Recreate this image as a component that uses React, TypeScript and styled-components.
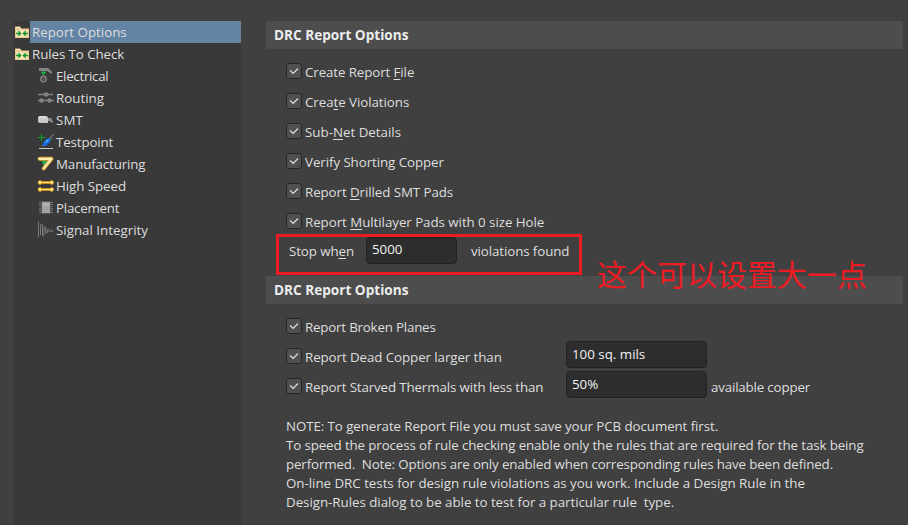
import React from "react";
import styled, { createGlobalStyle } from "styled-components";

const GlobalStyle = createGlobalStyle`
  * { box-sizing: border-box; }
  body {
    margin: 0;
    background: #404040;
    color: #dedede;
    font-family: "Open Sans", "Noto Sans", sans-serif;
    font-size: 13.33px;
    overflow: hidden;
  }
`;

const Window = styled.div`
  display: flex;
  width: 908px;
  height: 525px;
  padding: 21px 5px 0 14px;
  background: #404040;
`;

const Tree = styled.nav`
  flex: none;
  width: 227px;
  background: #393939;
`;

const TreeRow = styled.div<{ $depth: number }>`
  display: flex;
  height: 22px;
  padding-left: ${(p) => (p.$depth ? 23 : 0)}px;
`;

const TreeLabel = styled.span<{ $selected?: boolean; $inset: number }>`
  flex: 1;
  line-height: 22px;
  padding-left: ${(p) => p.$inset}px;
  white-space: nowrap;
  background: ${(p) => (p.$selected ? "#6384a5" : "transparent")};
  outline: ${(p) => (p.$selected ? "1px dotted #7d7f85" : "none")};
  outline-offset: -1px;
`;

const Icon = styled.svg`
  flex: none;
  display: block;
`;

const Label = styled.span<{ $ls?: number }>`
  white-space: pre;
  letter-spacing: ${(p) => p.$ls ?? 0}px;
`;

const Key = styled.span`
  text-decoration: underline;
  text-decoration-thickness: 1px;
  text-underline-offset: 2px;
  text-decoration-skip-ink: none;
`;

const Content = styled.main`
  flex: 1;
  margin-left: 25px;
`;

const Header = styled.h2`
  height: 28px;
  margin: 0;
  padding-left: 8px;
  background: #4d4d4d;
  color: #ececec;
  font-size: 13.6px;
  font-weight: 700;
  line-height: 28px;
`;

const Options = styled.div<{ $height: number }>`
  position: relative;
  height: ${(p) => p.$height}px;
  padding: 7px 0 0 20px;
`;

const Row = styled.div`
  display: flex;
  height: 30px;
  line-height: 30px;
`;

const Box = styled.span`
  flex: none;
  display: grid;
  place-items: center;
  width: 16px;
  height: 16px;
  margin: 7px 3px 0 0;
  border: 1px solid #262626;
  border-radius: 3px;
  background: #505050;
`;

const OptionText = styled.div<{ $width?: number }>`
  width: ${(p) => (p.$width ? p.$width + "px" : "auto")};
  padding-top: 1px;
`;

const Suffix = styled(OptionText)`
  padding-left: 4px;
`;

const Field = styled.input<{ $width: number }>`
  width: ${(p) => p.$width}px;
  height: 27px;
  padding: 0 0 2px 5px;
  border: 1px solid #222;
  border-radius: 4px;
  background: #2d2d2d;
  color: #f2f2f2;
  font: inherit;
  outline: none;
`;

const StopRow = styled.div`
  display: flex;
  height: 28px;
  padding: 1px 0 0 3px;
  line-height: 29px;
`;

const StopText = styled.div<{ $width: number; $inset?: number }>`
  width: ${(p) => p.$width}px;
  padding-left: ${(p) => p.$inset ?? 0}px;
`;

const Highlight = styled.div`
  position: absolute;
  left: 10px;
  top: 185px;
  width: 306px;
  height: 41px;
  border: 3px solid #ed1c24;
`;

const Annotation = styled.div`
  position: absolute;
  z-index: 1;
  left: 331px;
  top: 204px;
  color: #ed1c24;
  font: 400 30px/40px "Noto Sans CJK SC", sans-serif;
  white-space: nowrap;
`;

const Note = styled.div`
  padding: 1px 0 0 20px;
  line-height: 19.1px;
`;

const NoteLine = styled.div`
  height: 19.1px;
`;

const FolderIcon = () => (
  <Icon width="16" height="22" viewBox="0 0 16 22">
    <path d="M1 5.5h5l1.5 2H15V17H1z" fill="#e8c98e" />
    <path d="M2 6.5h3.500l1.500 2" fill="none" stroke="#fff0cd" />
    <path d="M2 9h12v7H2z" fill="#f5e3b8" />
    <path d="M2 12.500h4.500M4.300 10.200l2.400 2.300-2.400 2.300M14 12.500H9.500M11.700 10.200l-2.400 2.300 2.400 2.300" fill="none" stroke="#12952b" strokeWidth="1.3" />
  </Icon>
);

const drawings: Record<string, React.ReactNode> = {
  electrical: (
    <>
      <path d="M2 3h9l4 4v2l-5-3H2z" fill="#858585" />
      <path d="M6.5 5.5l2.5 2-2.5 3-2.5-3z" fill="#0d9638" />
      <path d="M5 7.5h1M7 7.5h1M6 9h1" stroke="#31c957" />
      <circle cx="6.5" cy="14" r="2.7" fill="none" stroke="#858585" strokeWidth="1.4" />
      <circle cx="6.5" cy="14" r=".8" fill="#858585" />
    </>
  ),
  routing: (
    <g fill="none" stroke="#858585" strokeWidth="1.3">
      <path d="M1 7.5h6M11 7.5h5M1 13.5h2M6 13.5h5M14 13.5h3" />
      <circle cx="9" cy="7.5" r="1.6" fill="#858585" />
      <circle cx="4.5" cy="13.5" r="1.6" fill="#858585" />
      <circle cx="12.5" cy="13.5" r="1.6" fill="#858585" />
    </g>
  ),
  smt: (
    <>
      <path d="M1 8.5Q1 7 3 7h6q2 0 2 2v5H4q-3 0-3-2z" fill="#c9c9c9" />
      <path d="M2 8h7" stroke="#ededed" />
      <path d="M11 9h3l2.3 4.5h-2L12.8 12H11z" fill="#939393" />
    </>
  ),
  testpoint: (
    <>
      <path d="M12 8l3.3-3.5M15 4h2M14 6v2.5" stroke="#666" strokeWidth="1.4" />
      <path d="M5 15l2-2" stroke="#aaa" />
      <ellipse cx="9.7" cy="11.2" rx="4.8" ry="2.4" transform="rotate(-46 9.7 11.2)" fill="#1268dc" />
      <path d="M8.500 11.500l3-3" stroke="#58b4ff" strokeWidth="1.3" />
      <path d="M4.500 3v7M1 6.500h7" stroke="#05a52c" />
      <path d="M2 17.500h14" stroke="#c4c4c4" />
    </>
  ),
  manufacturing: (
    <>
      <path d="M4 7l8 1-5 5z" fill="#21ad58" />
      <path d="M2.500 5.800h12L6.800 15.400" fill="none" stroke="#dca331" strokeWidth="3.9" strokeLinecap="round" strokeLinejoin="round" />
      <path d="M2.500 5.800h12L6.800 15.400" fill="none" stroke="#ffeab0" strokeWidth="2.2" strokeLinecap="round" strokeLinejoin="round" />
    </>
  ),
  highspeed: (
    <>
      {[7.5, 14.5].map((y) => (
        <g key={y}>
          <path d={`M3 ${y}h12`} stroke="#eda319" strokeWidth="2.6" />
          <path d={`M3 ${y}h12`} stroke="#ffdf78" />
          <circle cx="3" cy={y} r="1.8" fill="#fff1a5" stroke="#eda319" />
          <circle cx="14.7" cy={y} r="1.8" fill="#fff1a5" stroke="#eda319" />
        </g>
      ))}
    </>
  ),
  placement: (
    <>
      <path d="M2 5.5h14M2 7.5h14M2 9.5h14M2 11.5h14M2 13.5h14M2 15.5h14" stroke="#717171" />
      <rect x="4.5" y="4.5" width="9" height="12" fill="#a2a2a2" stroke="#585858" />
      <path d="M6 6h6v3H6z" fill="#b2b2b2" />
    </>
  ),
  signal: (
    <path
      d="M1.5 3v15M3.5 16V7q0-2 1-2t1 2v8q0 2 .8 2t.8-2V9q0-1.5.8-1.5T8.7 9v4q0 1.5.8 1.5t.8-1.5v-2q0-1 .8-1t.8 1v1q0 1 .9 1t.9-1 .9-1 .7 1 1 .5"
      fill="none"
      stroke="#828282"
      strokeWidth=".9"
    />
  ),
};

const categories: { icon: string; text: string; ls: number }[] = [
  { icon: "electrical", text: "Electrical", ls: -0.3 },
  { icon: "routing", text: "Routing", ls: 0 },
  { icon: "smt", text: "SMT", ls: 0.1 },
  { icon: "testpoint", text: "Testpoint", ls: -0.13 },
  { icon: "manufacturing", text: "Manufacturing", ls: -0.13 },
  { icon: "highspeed", text: "High Speed", ls: -0.06 },
  { icon: "placement", text: "Placement", ls: -0.25 },
  { icon: "signal", text: "Signal Integrity", ls: 0 },
];

const reportOptions: { parts: [string, string, string]; ls: number }[] = [
  { parts: ["Create Report ", "F", "ile"], ls: -0.1 },
  { parts: ["Crea", "t", "e Violations"], ls: -0.06 },
  { parts: ["Sub-", "N", "et Details"], ls: 0 },
  { parts: ["Verify Shorting Copper", "", ""], ls: -0.07 },
  { parts: ["Report ", "D", "rilled SMT Pads"], ls: -0.08 },
  { parts: ["Report ", "M", "ultilayer Pads with 0 size Hole"], ls: -0.05 },
];

const notes: { text: string; ls: number }[] = [
  { text: "NOTE: To generate Report File you must save your PCB document first.", ls: -0.085 },
  { text: "To speed the process of rule checking enable only the rules that are required for the task being", ls: -0.115 },
  { text: "performed.  Note: Options are only enabled when corresponding rules have been defined.", ls: -0.14 },
  { text: "On-line DRC tests for design rule violations as you work. Include a Design Rule in the", ls: -0.025 },
  { text: "Design-Rules dialog to be able to test for a particular rule  type.", ls: -0.035 },
];

const Check = () => (
  <Box>
    <svg width="14" height="14" viewBox="0 0 14 14">
      <path d="M3.2 6.5l3 3 4.8-5" fill="none" stroke="#e0e0e0" strokeWidth="1.2" />
    </svg>
  </Box>
);

export default function App() {
  return (
    <>
      <GlobalStyle />
      <Window>
        <Tree>
          <TreeRow $depth={0}>
            <FolderIcon />
            <TreeLabel $selected $inset={2}><Label>Report Options</Label></TreeLabel>
          </TreeRow>
          <TreeRow $depth={0}>
            <FolderIcon />
            <TreeLabel $inset={2}><Label $ls={-0.08}>Rules To Check</Label></TreeLabel>
          </TreeRow>
          {categories.map((c) => (
            <TreeRow key={c.text} $depth={1}>
              <Icon width="18" height="22" viewBox="0 0 18 22">{drawings[c.icon]}</Icon>
              <TreeLabel $inset={1}><Label $ls={c.ls}>{c.text}</Label></TreeLabel>
            </TreeRow>
          ))}
        </Tree>
        <Content>
          <Header>DRC Report Options</Header>
          <Options $height={227}>
            {reportOptions.map((o) => (
              <Row key={o.parts.join("")}>
                <Check />
                <OptionText>
                  <Label $ls={o.ls}>{o.parts[0]}<Key>{o.parts[1]}</Key>{o.parts[2]}</Label>
                </OptionText>
              </Row>
            ))}
            <StopRow>
              <StopText $width={77}><Label $ls={-0.1}>Stop wh<Key>e</Key>n</Label></StopText>
              <Field $width={91} defaultValue="5000" />
              <StopText $width={124} $inset={14}><Label $ls={-0.1}>violations found</Label></StopText>
            </StopRow>
            <Highlight />
            <Annotation>这个可以设置大一点</Annotation>
          </Options>
          <Header>DRC Report Options</Header>
          <Options $height={112}>
            <Row><Check /><OptionText><Label $ls={-0.2}>Report Broken Planes</Label></OptionText></Row>
            <Row>
              <Check />
              <OptionText $width={261}><Label $ls={-0.08}>Report Dead Copper larger than</Label></OptionText>
              <Field $width={141} defaultValue="100 sq. mils" />
            </Row>
            <Row>
              <Check />
              <OptionText $width={261}><Label $ls={-0.13}>Report Starved Thermals with less than</Label></OptionText>
              <Field $width={141} defaultValue="50%" />
              <Suffix><Label $ls={-0.17}>available copper</Label></Suffix>
            </Row>
          </Options>
          <Note>
            {notes.map((n) => (
              <NoteLine key={n.text}><Label $ls={n.ls}>{n.text}</Label></NoteLine>
            ))}
          </Note>
        </Content>
      </Window>
    </>
  );
}
